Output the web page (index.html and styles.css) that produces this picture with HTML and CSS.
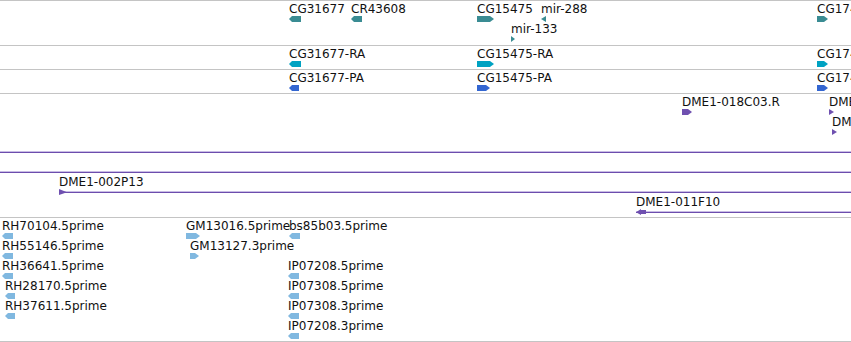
FILE: index.html
```html
<!DOCTYPE html>
<html>
<head>
<meta charset="utf-8">
<link rel="stylesheet" href="styles.css">
</head>
<body>
<div class="tracks">
  <div class="track genes first">
    <div class="feat" style="left:289px;top:1px"><div class="label">CG31677</div><div class="glyph teal left" style="width:12px"></div></div>
    <div class="feat" style="left:351px;top:1px"><div class="label">CR43608</div><div class="glyph teal left" style="width:11px"></div></div>
    <div class="feat" style="left:477px;top:1px"><div class="label">CG15475</div><div class="glyph teal right" style="width:17px"></div></div>
    <div class="feat" style="left:541px;top:1px"><div class="label">mir-288</div><div class="glyph teal tri-left" style="width:5px"></div></div>
    <div class="feat" style="left:511px;top:21px"><div class="label">mir-133</div><div class="glyph teal tri-right" style="width:4px"></div></div>
    <div class="feat" style="left:817px;top:1px"><div class="label">CG17480</div><div class="glyph teal right" style="width:11px"></div></div>
  </div>
  <div class="track short">
    <div class="feat" style="left:289px;top:1px"><div class="label">CG31677-RA</div><div class="glyph cyan left" style="width:12px"></div></div>
    <div class="feat" style="left:477px;top:1px"><div class="label">CG15475-RA</div><div class="glyph cyan right" style="width:17px"></div></div>
    <div class="feat" style="left:817px;top:1px"><div class="label">CG17480-RA</div><div class="glyph cyan right" style="width:11px"></div></div>
  </div>
  <div class="track short">
    <div class="feat" style="left:289px;top:1px"><div class="label">CG31677-PA</div><div class="glyph blue left" style="width:10px"></div></div>
    <div class="feat" style="left:477px;top:1px"><div class="label">CG15475-PA</div><div class="glyph blue right" style="width:13px"></div></div>
    <div class="feat" style="left:817px;top:1px"><div class="label">CG17480-PA</div><div class="glyph blue right" style="width:11px"></div></div>
  </div>
  <div class="track tall">
    <div class="feat" style="left:682px;top:1px"><div class="label">DME1-018C03.R</div><div class="glyph purple right" style="width:10px"></div></div>
    <div class="feat" style="left:829px;top:1px"><div class="label">DME1-018C03.F</div><div class="glyph purple tri-right" style="width:5px"></div></div>
    <div class="feat" style="left:832px;top:21px"><div class="label">DME1-020A11.F</div><div class="glyph purple tri-right" style="width:5px"></div></div>
    <div class="feat wide" style="left:0;top:41px;width:851px"><div class="label"></div><div class="glyph pline"><div class="stroke"></div></div></div>
    <div class="feat wide" style="left:0;top:61px;width:851px"><div class="label"></div><div class="glyph pline"><div class="stroke"></div></div></div>
    <div class="feat wide" style="left:59px;top:81px;width:792px">
      <div class="label">DME1-002P13</div>
      <div class="glyph pline"><div class="stroke"></div><div class="head head-r"></div></div>
    </div>
    <div class="feat wide" style="left:636px;top:101px;width:215px">
      <div class="label">DME1-011F10</div>
      <div class="glyph pline"><div class="stroke"></div><div class="head head-l"></div></div>
    </div>
  </div>
  <div class="track tall">
    <div class="feat" style="left:2px;top:1px"><div class="label">RH70104.5prime</div><div class="glyph est left" style="width:11px"></div></div>
    <div class="feat" style="left:2px;top:21px"><div class="label">RH55146.5prime</div><div class="glyph est left" style="width:11px"></div></div>
    <div class="feat" style="left:2px;top:41px"><div class="label">RH36641.5prime</div><div class="glyph est left" style="width:11px"></div></div>
    <div class="feat" style="left:5px;top:61px"><div class="label">RH28170.5prime</div><div class="glyph est left" style="width:10px"></div></div>
    <div class="feat" style="left:5px;top:81px"><div class="label">RH37611.5prime</div><div class="glyph est left" style="width:10px"></div></div>
    <div class="feat" style="left:186px;top:1px"><div class="label">GM13016.5prime</div><div class="glyph est right" style="width:14px"></div></div>
    <div class="feat" style="left:190px;top:21px"><div class="label">GM13127.3prime</div><div class="glyph est right" style="width:9px"></div></div>
    <div class="feat" style="left:289px;top:1px"><div class="label">bs85b03.5prime</div><div class="glyph est left" style="width:11px"></div></div>
    <div class="feat" style="left:288px;top:41px"><div class="label">IP07208.5prime</div><div class="glyph est left" style="width:11px"></div></div>
    <div class="feat" style="left:288px;top:61px"><div class="label">IP07308.5prime</div><div class="glyph est left" style="width:11px"></div></div>
    <div class="feat" style="left:288px;top:81px"><div class="label">IP07308.3prime</div><div class="glyph est left" style="width:11px"></div></div>
    <div class="feat" style="left:288px;top:101px"><div class="label">IP07208.3prime</div><div class="glyph est left" style="width:11px"></div></div>
  </div>
</div>
</body>
</html>
```

FILE: styles.css
```css
html, body {
  margin: 0;
  padding: 0;
  background: #ffffff;
  overflow: hidden;
}

body {
  width: 851px;
  height: 342px;
  font-family: "DejaVu Sans", "Liberation Sans", sans-serif;
  font-size: 12px;
  line-height: 14px;
  color: #111111;
}

.tracks {
  display: flex;
  flex-direction: column;
  width: 851px;
}

.track {
  position: relative;
  overflow: hidden;
  border-bottom: 1px solid #c4c4c4;
}

.track.first {
  border-top: 1px solid #c4c4c4;
}

.genes { height: 44px; }
.short { height: 23px; }
.tall { height: 123px; }

.feat {
  position: absolute;
  display: flex;
  flex-direction: column;
  align-items: flex-start;
}

.feat.wide {
  align-items: stretch;
}

.label {
  height: 14px;
  white-space: nowrap;
}

.glyph {
  display: block;
  height: 6px;
}

.teal { background: #3a8c93; }
.cyan { background: #00a2c2; }
.blue { background: #3366d1; }
.purple { background: #6f50b0; }
.est { background: #80b8e0; }

.left {
  clip-path: polygon(3px 0, 100% 0, 100% 100%, 3px 100%, 0 50%);
}

.right {
  clip-path: polygon(0 0, calc(100% - 4px) 0, 100% 50%, calc(100% - 4px) 100%, 0 100%);
}

.tri-left {
  clip-path: polygon(100% 0, 100% 100%, 0 50%);
}

.tri-right {
  clip-path: polygon(0 0, 100% 50%, 0 100%);
}

.pline {
  position: relative;
}

.stroke {
  position: absolute;
  left: 0;
  right: 0;
  top: 3px;
  height: 1px;
  background: #6c4dad;
  box-shadow: 0 -1px 0 #c9bde5;
}

.head {
  position: absolute;
  top: 0;
  height: 6px;
  background: #6f50b0;
}

.head-r {
  left: 0;
  width: 8px;
  clip-path: polygon(0 0, 100% 55%, 0 100%);
}

.head-l {
  left: 0;
  width: 10px;
  clip-path: polygon(0 55%, 5px 0, 5px 1px, 100% 1px, 100% 5px, 5px 5px, 5px 100%);
}
```
